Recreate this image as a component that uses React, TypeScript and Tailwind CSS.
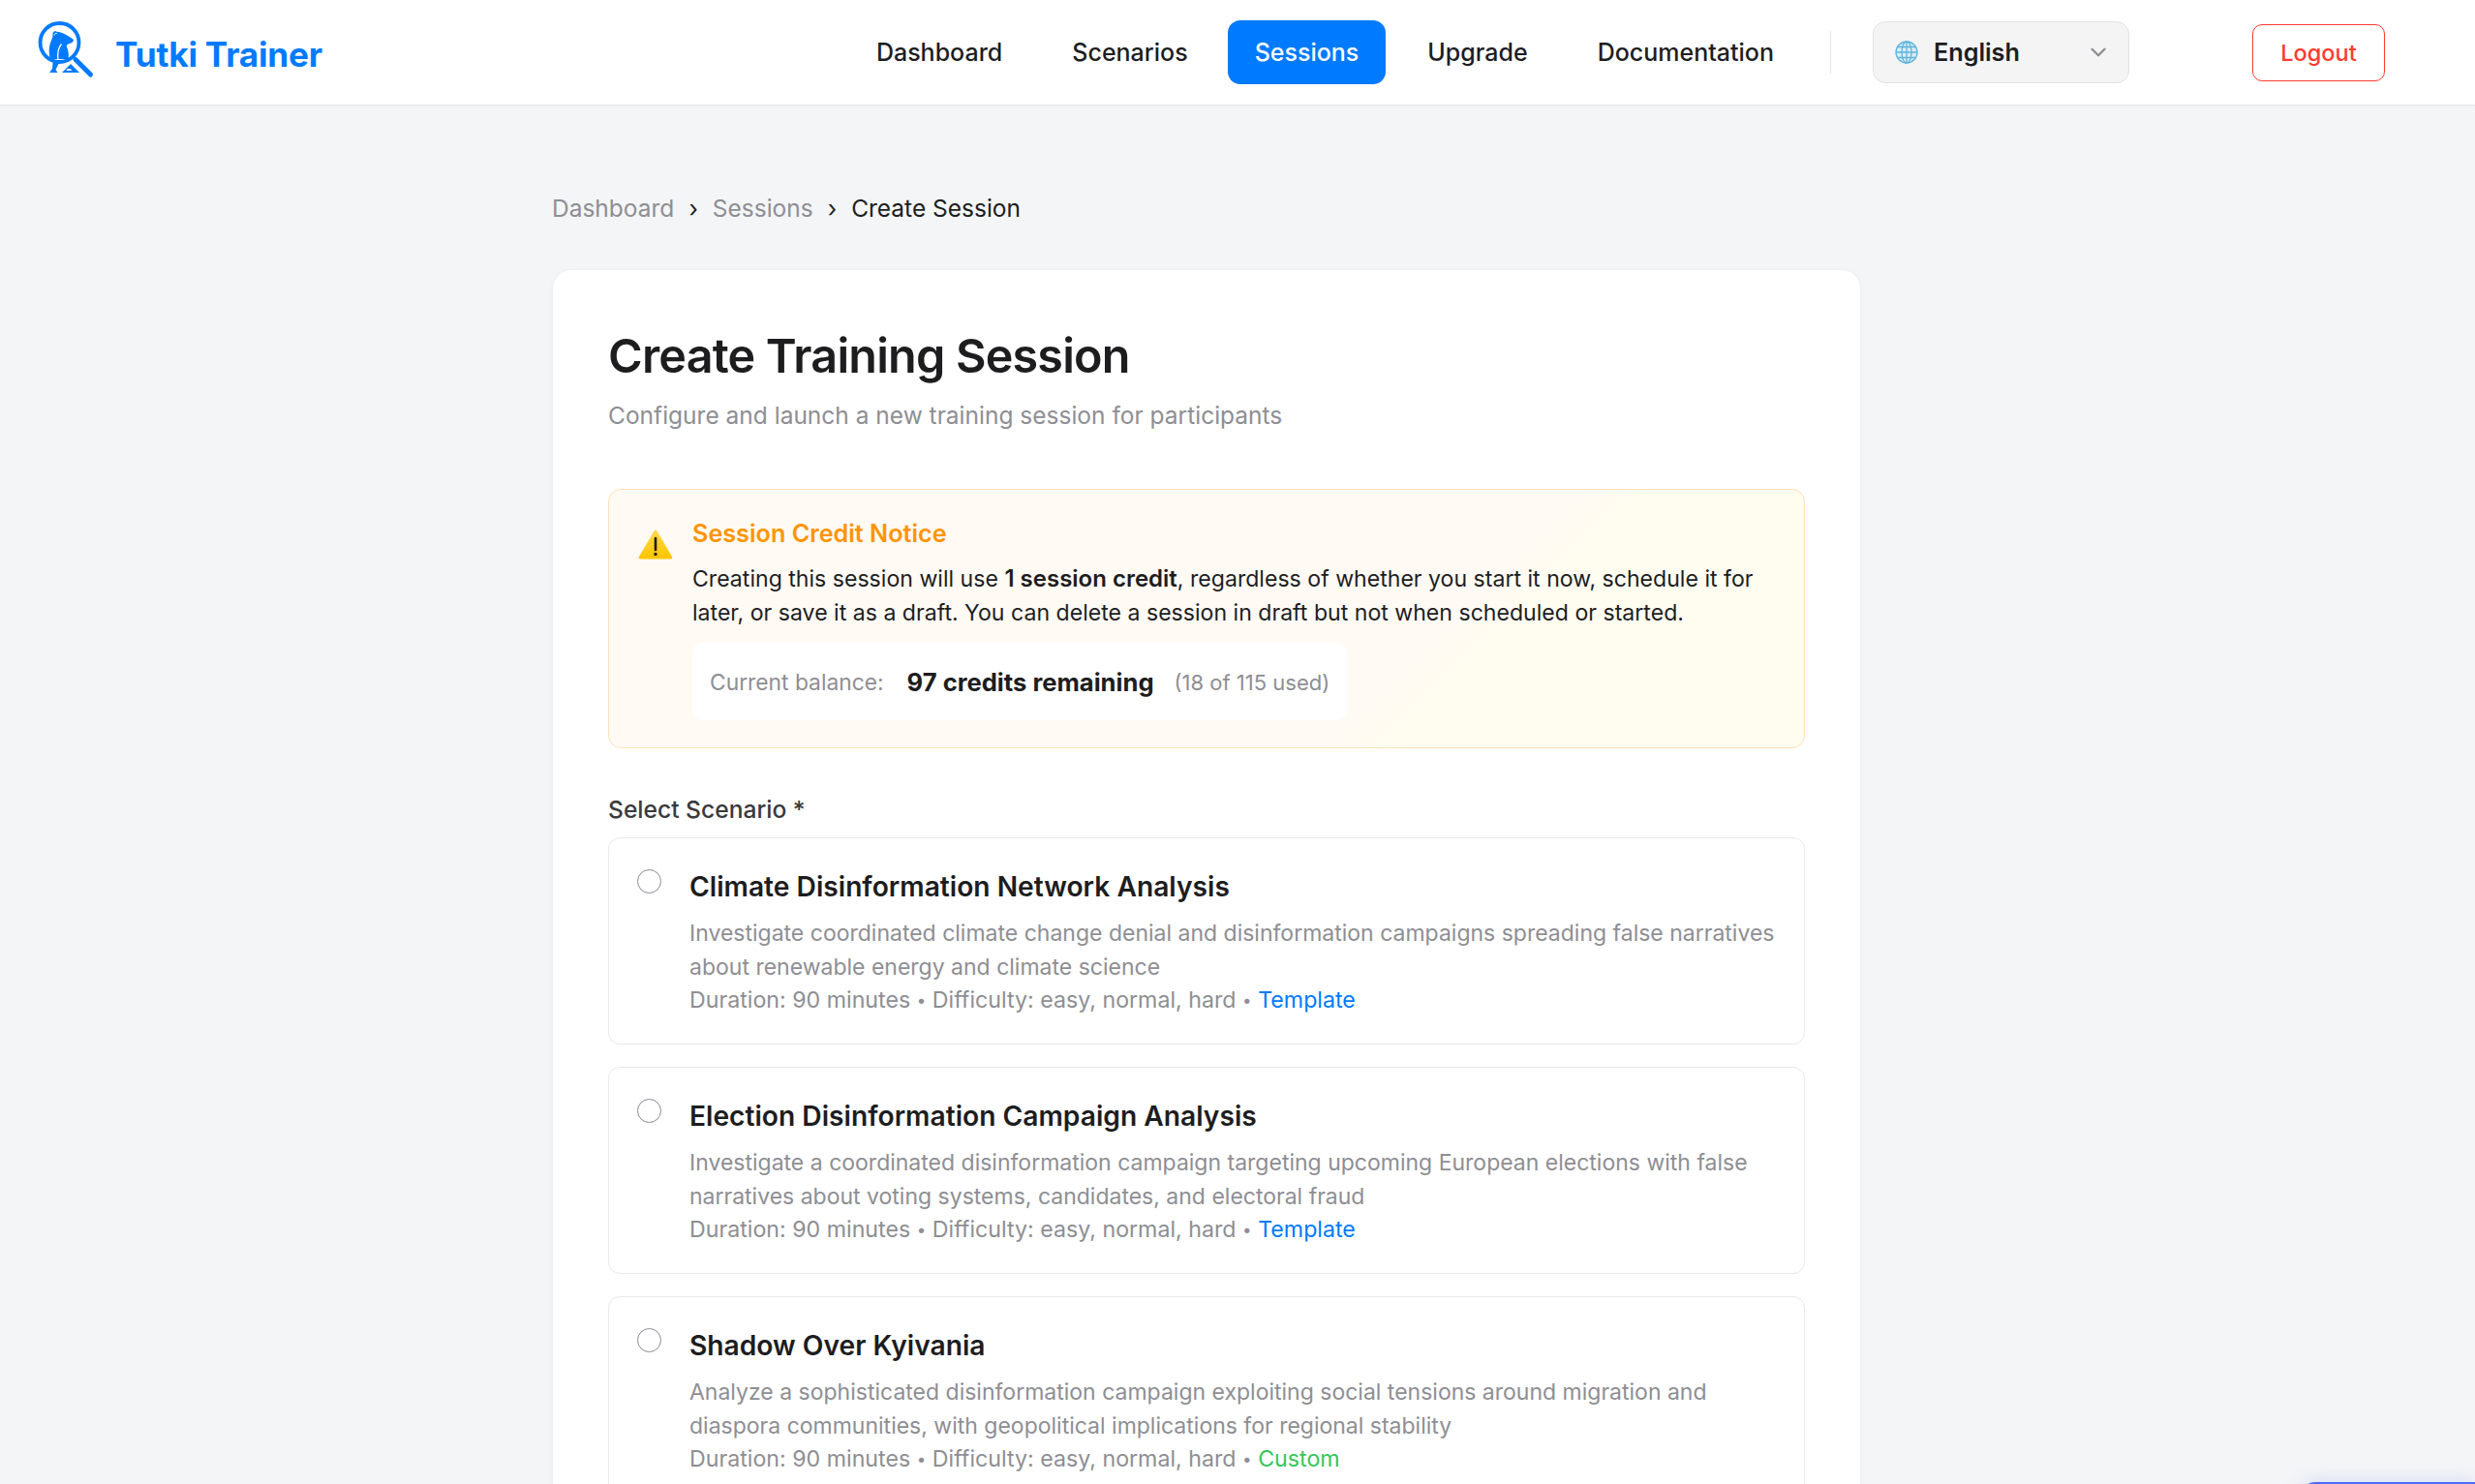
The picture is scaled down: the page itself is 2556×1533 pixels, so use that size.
import React from 'react';
import { ChevronDown } from 'lucide-react';

const navItems = ['Dashboard', 'Scenarios', 'Sessions', 'Upgrade', 'Documentation'];

const scenarios = [
  {
    title: 'Climate Disinformation Network Analysis',
    lines: [
      'Investigate coordinated climate change denial and disinformation campaigns spreading false narratives',
      'about renewable energy and climate science',
    ],
    tag: 'Template',
  },
  {
    title: 'Election Disinformation Campaign Analysis',
    lines: [
      'Investigate a coordinated disinformation campaign targeting upcoming European elections with false',
      'narratives about voting systems, candidates, and electoral fraud',
    ],
    tag: 'Template',
  },
  {
    title: 'Shadow Over Kyivania',
    lines: [
      'Analyze a sophisticated disinformation campaign exploiting social tensions around migration and',
      'diaspora communities, with geopolitical implications for regional stability',
    ],
    tag: 'Custom',
  },
];

function Logo() {
  return (
    <svg width="60" height="60" viewBox="0 0 60 60" className="shrink-0 mb-[4px]">
      {/* animal silhouette, its lower edge runs under the ring */}
      <path
        d="M16.500 14 C16 11 18.500 9.500 20.500 10.800 C25.500 11 32 14.500 38 19 C38 21 36 22.800 32.500 23.500 C31 24 30.500 25 31 26.500 C32.500 30 33.500 35 32.500 39 L14 39 C12 33 12.500 26 14.500 21 C15.500 18.500 16.500 16.500 16.500 14 Z"
        fill="#007aff"
      />
      <path d="M25.500 23.500 C22.500 27 21 33 22 40" fill="none" stroke="#ffffff" strokeWidth="1.300" />
      <path d="M18.200 14.500 C18.200 12.800 19.500 12 20.800 12.500" fill="none" stroke="#ffffff" strokeWidth="1" />
      <circle cx="23.500" cy="22" r="20" fill="none" stroke="#007aff" strokeWidth="3.800" />
      <path d="M40 39.500 L55.500 55" stroke="#007aff" strokeWidth="5" strokeLinecap="round" />
      {/* legs and mound */}
      <path d="M16.500 43 L23 43 L19.500 50 L21.500 53 L13 53 L16 49 Z" fill="#007aff" />
      <path d="M26 53 L35 44 L44 53 Z" fill="#007aff" />
      <path d="M31.500 49 L35 49 L36 51 L30.500 51 Z" fill="#ffffff" />
    </svg>
  );
}

function Globe() {
  return (
    <svg width="24" height="24" viewBox="0 0 24 24" fill="none" stroke="#5fb4dc" strokeWidth="1.300" className="shrink-0">
      <circle cx="12" cy="12" r="11" fill="#d8eef8" />
      <ellipse cx="12" cy="12" rx="5" ry="11" />
      <path d="M12 1 V23 M1 12 H23 M2.500 6.500 H21.500 M2.500 17.500 H21.500" />
    </svg>
  );
}

function WarningIcon() {
  return (
    <svg width="36" height="32" viewBox="0 0 36 32" className="shrink-0">
      <defs>
        <linearGradient id="warn" x1="0" y1="0" x2="0" y2="1">
          <stop offset="0%" stopColor="#ffdb4d" />
          <stop offset="100%" stopColor="#ffc400" />
        </linearGradient>
      </defs>
      <path d="M18 1.500 C18.800 1.500 19.300 2 19.800 2.900 L35 29 C35.700 30.300 35 31.500 33.500 31.500 L2.500 31.500 C1 31.500 0.300 30.300 1 29 L16.200 2.900 C16.700 2 17.200 1.500 18 1.500 Z" fill="url(#warn)" />
      <path d="M18 10 V22" stroke="#1d1d1f" strokeWidth="2.600" strokeLinecap="round" />
      <circle cx="18" cy="26.500" r="1.700" fill="#1d1d1f" />
    </svg>
  );
}

export default function App() {
  return (
    <div className="h-[1533px] overflow-hidden relative bg-[#f4f5f7] font-['Inter',sans-serif] text-[#1d1d1f]">
      <header className="h-[109px] bg-white border-b border-[#e8e8ea] shadow-[0_1px_3px_rgba(0,0,0,0.04)] flex items-center pl-[38px] pr-[93px]">
        <Logo />
        <span className="ml-[21px] mt-[4px] text-[35.200px] font-bold text-[#007aff] tracking-[-0.2px]">Tutki Trainer</span>
        <nav className="ml-auto flex items-center gap-[14px]">
          {navItems.map(item => (
            <a
              key={item}
              className={
                item === 'Sessions'
                  ? 'h-[66px] ml-[-2px] px-[28px] pt-px rounded-[13px] bg-[#007aff] text-white text-[25px] font-medium flex items-center'
                  : 'h-[66px] px-[29px] pt-px rounded-[13px] text-[#1d1d1f] text-[25px] font-medium flex items-center'
              }
            >
              {item}
            </a>
          ))}
        </nav>
        <div className="ml-[29px] w-px h-[44px] bg-[#e5e5e7]" />
        <div className="ml-[43px] w-[265px] h-[64px] rounded-[13px] border border-[#e3e3e5] bg-[#f4f4f5] flex items-center pl-[22px] pr-[18px]">
          <Globe />
          <span className="ml-[16px] pt-px text-[25.200px] font-semibold">English</span>
          <ChevronDown size={26} strokeWidth={2.200} className="ml-auto text-[#8e8e93]" />
        </div>
        <button className="ml-[127px] w-[137px] h-[59px] pt-px rounded-[10px] border-[1.500px] border-[#ff3b30] bg-white text-[#ff3b30] text-[23.500px] font-medium">
          Logout
        </button>
      </header>

      <main className="w-[1352px] ml-[570px]">
        <div className="mt-[90px] flex items-center h-[32px] text-[24.500px]">
          <span className="text-[#8e8e93]">Dashboard</span>
          <span className="mx-[15px]">›</span>
          <span className="text-[#8e8e93]">Sessions</span>
          <span className="mx-[15px]">›</span>
          <span>Create Session</span>
        </div>

        <section className="mt-[47px] bg-white rounded-[20px] border border-[#f0f0f2] shadow-[0_1px_4px_rgba(0,0,0,0.03)] px-[57px] pt-[57px]">
          <h1 className="text-[48.500px] leading-[64px] font-semibold tracking-[-0.8px]">Create Training Session</h1>
          <p className="mt-[11px] text-[24.500px] leading-[36px] text-[#8e8e93]">Configure and launch a new training session for participants</p>

          <div className="mt-[58px] h-[268px] rounded-[13px] border-[1.500px] border-[#ffe2b8] bg-[linear-gradient(135deg,#fffaf3_0%,#fffaf4_66%,#fffcf0_72%,#fffcf0_100%)] flex pl-[30px] pt-[27px]">
            <div className="mt-[13px] mr-[20px]">
              <WarningIcon />
            </div>
            <div>
              <h3 className="text-[25.200px] leading-[36px] font-semibold text-[#ff9500]">Session Credit Notice</h3>
              <p className="mt-[11px] text-[23.100px] leading-[35px] whitespace-nowrap">
                Creating this session will use <strong className="text-[24px] font-semibold">1 session credit</strong>, regardless of whether you start it now, schedule it for
                <br />
                later, or save it as a draft. You can delete a session in draft but not when scheduled or started.
              </p>
              <div className="mt-[13px] inline-flex items-center h-[80px] px-[18px] pt-[3px] rounded-[10px] bg-white">
                <span className="text-[22.800px] text-[#8e8e93]">Current balance:</span>
                <span className="ml-[24px] text-[25.600px] font-bold">97 credits remaining</span>
                <span className="ml-[21px] text-[22px] text-[#8e8e93]">(18 of 115 used)</span>
              </div>
            </div>
          </div>

          <label className="block mt-[45px] text-[24.600px] leading-[36px] font-medium text-[#3a3a3c]">Select Scenario *</label>

          <div className="mt-[11px] flex flex-col gap-[23px]">
            {scenarios.map(s => (
              <div key={s.title} className="h-[214px] rounded-[12px] border-[1.500px] border-[#e8e8ed] flex pl-[29px] pt-[32px]">
                <span className="w-[25px] h-[25px] rounded-full border border-[#8a8a92] bg-white shrink-0" />
                <div className="ml-[29px]">
                  <h4 className="text-[28.200px] leading-[36px] font-semibold">{s.title}</h4>
                  <div className="mt-[13px] text-[23.200px] leading-[34.500px] text-[#8e8e93] whitespace-nowrap">
                    {s.lines.map(line => (
                      <div key={line} className="text-[23px]">{line}</div>
                    ))}
                    <div>
                      Duration: 90 minutes <span className="text-[17px] align-[2px]">•</span> Difficulty: easy, normal, hard <span className="text-[17px] align-[2px]">•</span>{' '}
                      <span className={s.tag === 'Custom' ? 'text-[#34c759]' : 'text-[#007aff]'}>{s.tag}</span>
                    </div>
                  </div>
                </div>
              </div>
            ))}
          </div>
        </section>
      </main>

      {/* floating widget peeking in at the bottom edge */}
      <div className="absolute left-[2375px] top-[1531px] w-[181px] h-[60px] rounded-tl-[16px] bg-[#4a6cf7] shadow-[0_0_20px_rgba(74,108,247,0.2)]" />
    </div>
  );
}
